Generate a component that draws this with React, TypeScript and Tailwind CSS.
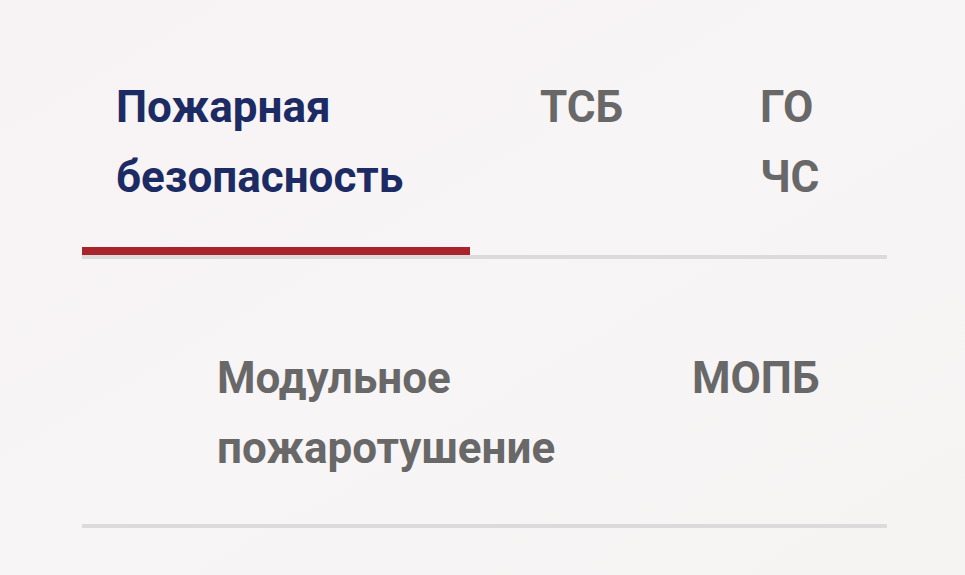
import * as React from "react";

const tabs = [
  { label: "Пожарная безопасность", active: true, cls: "w-[388px] pl-[34px]" },
  { label: "ТСБ", active: false, cls: "w-[220px] pl-[70px]" },
  { label: "ГО ЧС", active: false, cls: "w-[140px] pl-[70px]" },
];

const subTabs = [
  { label: "Модульное пожаротушение", cls: "w-[540px] pl-[135px]" },
  { label: "МОПБ", cls: "pl-[70px]" },
];

export default function App() {
  return (
    <div
      className="min-h-[575px] w-full bg-gradient-to-br from-[#f7f3f4] via-[#f8f5f6] to-[#f6f3f3] pl-[82px] pr-[78px] pt-[72px] text-[44px] font-bold leading-[70px]"
      style={{ fontFamily: "Roboto, 'Liberation Sans', sans-serif" }}
    >
      <div className="flex border-b-4 border-[#dcdada]">
        {tabs.map((t) => (
          <div
            key={t.label}
            className={
              t.cls +
              (t.active
                ? " border-b-8 border-[#a8232a] pb-[35px] text-[#1c2b63]"
                : " pb-[43px] text-[#686868]")
            }
          >
            {t.label}
          </div>
        ))}
      </div>

      <div className="flex border-b-4 border-[#dcdada] pt-[84px] pb-[41px]">
        {subTabs.map((t) => (
          <div key={t.label} className={t.cls + " text-[#686868]"}>
            {t.label}
          </div>
        ))}
      </div>
    </div>
  );
}
